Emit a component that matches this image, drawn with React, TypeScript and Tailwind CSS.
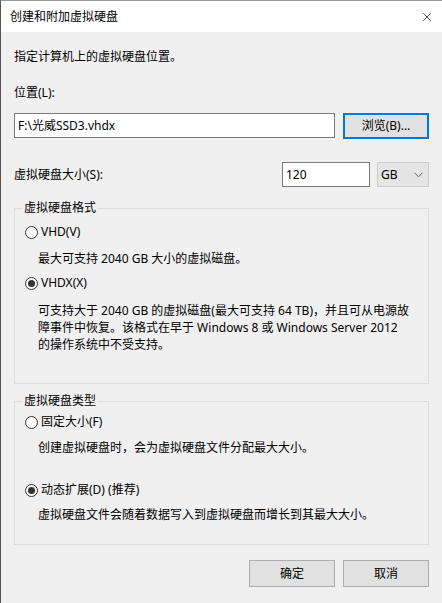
import { X } from 'lucide-react';

const font = { fontFamily: '"Noto Sans", "Noto Sans CJK SC", sans-serif' };

function Radio({ checked, label }: { checked?: boolean; label: string }) {
  return (
    <div className="flex h-[16px] items-center pl-[10px]">
      <span className="flex h-[13px] w-[13px] items-center justify-center rounded-full border border-[#333333] bg-white">
        {checked && <span className="h-[7px] w-[7px] rounded-full bg-[#333333]" />}
      </span>
      <span className="ml-[3px] leading-[16px]">{label}</span>
    </div>
  );
}

function Group({ title, children }: { title: string; children: React.ReactNode }) {
  return (
    <fieldset className="border border-[#dcdcdc] pb-0">
      <legend className="ml-[8px] px-px leading-[16px]">{title}</legend>
      {children}
    </fieldset>
  );
}

export default function App() {
  return (
    <div
      className="flex h-[603px] w-[442px] flex-col border-t border-l border-t-[#9a9a9a] border-l-[#555555] bg-[#f0f0f0] text-[12px] text-black"
      style={font}
    >
      <div className="flex h-[31px] shrink-0 items-center justify-between bg-white pl-[9px] pr-[8px]">
        <span className="leading-[16px]">创建和附加虚拟硬盘</span>
        <X size={14} strokeWidth={1.2} className="text-black" />
      </div>

      <div className="flex flex-1 flex-col px-[13px]">
        <p className="mt-[17px] leading-[16px]">指定计算机上的虚拟硬盘位置。</p>
        <p className="mt-[20px] leading-[16px]">位置(L):</p>

        <div className="mt-[12px] flex gap-[8px]">
          <div className="flex h-[25px] flex-1 items-center border border-[#7a7a7a] bg-white px-[3px]">
            F:\光威SSD3.vhdx
          </div>
          <button className="h-[26px] w-[86px] border-2 border-[#0078d7] bg-[#e1e1e1]">浏览(B)...</button>
        </div>

        <div className="mt-[23px] flex items-center gap-[7px]">
          <span className="flex-1 leading-[16px]">虚拟硬盘大小(S):</span>
          <div className="flex h-[25px] w-[88px] items-center border border-[#7a7a7a] bg-white px-[3px]">120</div>
          <div className="flex h-[25px] w-[52px] items-center justify-between border border-[#cccccc] bg-[#e5e5e5] pl-[3px] pr-[5px]">
            <span>GB</span>
            <svg width="9" height="6" viewBox="0 0 9 6" fill="none" stroke="#606060" strokeWidth="1">
              <path d="M0.5 0.8 L4.5 4.8 L8.5 0.8" />
            </svg>
          </div>
        </div>

        <div className="mt-[13px]">
          <Group title="虚拟硬盘格式">
            <div className="mt-[8px]">
              <Radio label="VHD(V)" />
            </div>
            <p className="mt-[11px] pl-[23px] leading-[16px]">最大可支持 2040 GB 大小的虚拟磁盘。</p>
            <div className="mt-[8px]">
              <Radio checked label="VHDX(X)" />
            </div>
            <p className="mt-[11px] whitespace-nowrap pb-[30px] pl-[23px] leading-[17px]">
              可支持大于 2040 GB 的虚拟磁盘(最大可支持 64 TB)，并且可从电源故
              <br />
              障事件中恢复。该格式在早于 Windows 8 或 Windows Server 2012
              <br />
              的操作系统中不受支持。
            </p>
          </Group>
        </div>

        <div className="mt-[9px]">
          <Group title="虚拟硬盘类型">
            <div className="mt-[5px]">
              <Radio label="固定大小(F)" />
            </div>
            <p className="mt-[10px] pl-[23px] leading-[16px]">创建虚拟硬盘时，会为虚拟硬盘文件分配最大大小。</p>
            <div className="mt-[26px]">
              <Radio checked label="动态扩展(D) (推荐)" />
            </div>
            <p className="mt-[9px] pb-[21px] pl-[23px] leading-[16px]">虚拟硬盘文件会随着数据写入到虚拟硬盘而增长到其最大大小。</p>
          </Group>
        </div>

        <div className="mt-[15px] flex justify-end gap-[8px]">
          <button className="h-[27px] w-[86px] border border-[#adadad] bg-[#e1e1e1]">确定</button>
          <button className="h-[27px] w-[86px] border border-[#adadad] bg-[#e1e1e1]">取消</button>
        </div>
      </div>
    </div>
  );
}
